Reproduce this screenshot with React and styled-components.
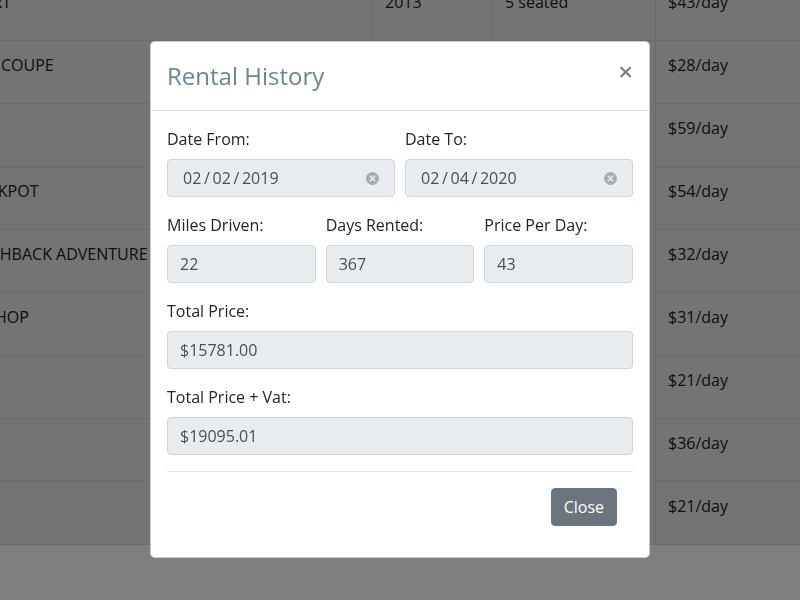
import React, { useLayoutEffect, useRef } from 'react';
import styled, { createGlobalStyle } from 'styled-components';

const GlobalStyle = createGlobalStyle`
  html, body {
    margin: 0;
    padding: 0;
    background: #fff;
    font-family: "Open Sans", "DejaVu Sans", sans-serif;
    color: #212529;
  }
  * { box-sizing: border-box; }
`;

const cars = [
  { name: 'SMART', year: 2013, seats: '5 seated', price: 43 },
  { name: 'AUDI COUPE', year: 2015, seats: '2 seated', price: 28 },
  { name: 'MINI', year: 2017, seats: '4 seated', price: 59 },
  { name: 'A JACKPOT', year: 2012, seats: '5 seated', price: 54 },
  { name: 'HATCHBACK ADVENTURE', year: 2016, seats: '5 seated', price: 32 },
  { name: 'KIT SHOP', year: 2014, seats: '7 seated', price: 31 },
  { name: 'KIA', year: 2011, seats: '5 seated', price: 21 },
  { name: 'FIAT', year: 2018, seats: '4 seated', price: 36 },
  { name: 'SEAT', year: 2010, seats: '5 seated', price: 21 },
];

// thin spaces round the slashes, like the browser's date field
const fmtDate = (d) => d.split('/').join('\u2009/\u2009');

function RentalModal() {
  return (
    <Backdrop>
      <Dialog>
        <DialogHeader>
          <Title>Rental History</Title>
          <CloseX type="button">×</CloseX>
        </DialogHeader>
        <DialogBody>
          <FieldRow cols={2}>
            <Field>
              <Label>Date From:</Label>
              <DateBox>
                <span>{fmtDate('02/02/2019')}</span>
                <ClearIcon />
              </DateBox>
            </Field>
            <Field>
              <Label>Date To:</Label>
              <DateBox>
                <span>{fmtDate('02/04/2020')}</span>
                <ClearIcon />
              </DateBox>
            </Field>
          </FieldRow>
          <FieldRow cols={3}>
            <Field>
              <Label>Miles Driven:</Label>
              <Input disabled value="22" readOnly />
            </Field>
            <Field>
              <Label>Days Rented:</Label>
              <Input disabled value="367" readOnly />
            </Field>
            <Field>
              <Label>Price Per Day:</Label>
              <Input disabled value="43" readOnly />
            </Field>
          </FieldRow>
          <FieldRow cols={1}>
            <Field>
              <Label>Total Price:</Label>
              <Input disabled value="$15781.00" readOnly />
            </Field>
          </FieldRow>
          <FieldRow cols={1}>
            <Field>
              <Label>Total Price + Vat:</Label>
              <Input disabled value="$19095.01" readOnly />
            </Field>
          </FieldRow>
          <Divider />
          <Footer>
            <SecondaryButton type="button">Close</SecondaryButton>
          </Footer>
        </DialogBody>
      </Dialog>
    </Backdrop>
  );
}

function ClearIcon() {
  return (
    <svg width="13" height="13" viewBox="0 0 13 13">
      <circle cx="6.5" cy="6.5" r="6.5" fill="#a9abad" />
      <path d="M4.3 4.3 L8.7 8.7 M8.7 4.3 L4.3 8.7" stroke="#e9ecef" strokeWidth="1.6" strokeLinecap="round" />
    </svg>
  );
}

export default function App() {
  const ref = useRef(null);

  useLayoutEffect(() => {
    if (ref.current) {
      ref.current.scrollTop = 23;
      ref.current.scrollLeft = 54;
    }
  }, []);

  return (
    <>
      <GlobalStyle />
      <Viewport ref={ref}>
        <Page>
          <CarTable>
            <colgroup>
              <col style={{ width: 426 }} />
              <col style={{ width: 120 }} />
              <col style={{ width: 163 }} />
              <col style={{ width: 291 }} />
            </colgroup>
            <tbody>
              {cars.map((c, i) => (
                <tr key={i}>
                  <Cell>{c.name}</Cell>
                  <Cell>{c.year}</Cell>
                  <Cell>{c.seats}</Cell>
                  <Cell>${c.price}/day</Cell>
                </tr>
              ))}
            </tbody>
          </CarTable>
        </Page>
      </Viewport>
      <RentalModal />
    </>
  );
}

const Viewport = styled.div`
  width: 100vw;
  height: 100vh;
  overflow: hidden;
`;

const Page = styled.div`
  width: 1000px;
  padding-bottom: 200px;
`;

const CarTable = styled.table`
  width: 1000px;
  table-layout: fixed;
  border-collapse: collapse;
  background: #e8e8e8;
  font-size: 16px;
  color: #222;
`;

const Cell = styled.td`
  border: 1px solid #d6d6d6;
  padding: 12px 12px 26px;
  line-height: 24px;
  vertical-align: top;
  white-space: nowrap;
  overflow: hidden;
`;

const Backdrop = styled.div`
  position: fixed;
  inset: 0;
  background: rgba(0, 0, 0, 0.5);
  display: flex;
  justify-content: center;
  align-items: flex-start;
`;

const Dialog = styled.div`
  margin-top: 41px;
  width: 500px;
  background: #fff;
  border: 1px solid rgba(0, 0, 0, 0.2);
  border-radius: 5px;
  display: flex;
  flex-direction: column;
`;

const DialogHeader = styled.div`
  display: flex;
  align-items: flex-start;
  justify-content: space-between;
  padding: 16px;
  border-bottom: 1px solid #dee2e6;
`;

const Title = styled.h4`
  margin: 0;
  font-size: 24px;
  font-weight: 400;
  line-height: 36px;
  color: #6f8396;
`;

const CloseX = styled.button`
  border: 0;
  background: transparent;
  padding: 0;
  margin-top: 1px;
  font-family: "Open Sans", sans-serif;
  font-size: 26px;
  font-weight: 600;
  line-height: 24px;
  color: #000;
  opacity: 0.5;
  cursor: pointer;
`;

const DialogBody = styled.div`
  padding: 16px 16px 31px;
`;

const FieldRow = styled.div`
  display: grid;
  grid-template-columns: repeat(${(p) => p.cols}, 1fr);
  column-gap: 10px;
  margin-bottom: 16px;
`;

const Field = styled.div`
  display: flex;
  flex-direction: column;
  min-width: 0;
`;

const Label = styled.label`
  font-size: 16px;
  line-height: 24px;
  margin-bottom: 8px;
  color: #212529;
`;

const Input = styled.input`
  height: 38px;
  width: 100%;
  padding: 6px 12px;
  font-family: "Open Sans", sans-serif;
  font-size: 16px;
  color: #495057;
  background: #e9ecef;
  border: 1px solid #ced4da;
  border-radius: 4px;
  opacity: 1;
  &:disabled {
    color: #495057;
    -webkit-text-fill-color: #495057;
  }
`;

const DateBox = styled.div`
  height: 38px;
  display: flex;
  align-items: center;
  justify-content: space-between;
  padding: 0 15px 0 15px;
  font-size: 16px;
  color: #495057;
  background: #e9ecef;
  border: 1px solid #ced4da;
  border-radius: 4px;
  svg { display: block; }
`;

const Divider = styled.hr`
  margin: 0 0 16px;
  border: 0;
  border-top: 1px solid rgba(0, 0, 0, 0.1);
`;

const Footer = styled.div`
  display: flex;
  justify-content: flex-end;
  padding-right: 16px;
`;

const SecondaryButton = styled.button`
  height: 38px;
  padding: 6px 12px;
  font-family: "Open Sans", sans-serif;
  font-size: 16px;
  line-height: 24px;
  color: #fff;
  background: #6c757d;
  border: 1px solid #6c757d;
  border-radius: 4px;
  cursor: pointer;
`;
